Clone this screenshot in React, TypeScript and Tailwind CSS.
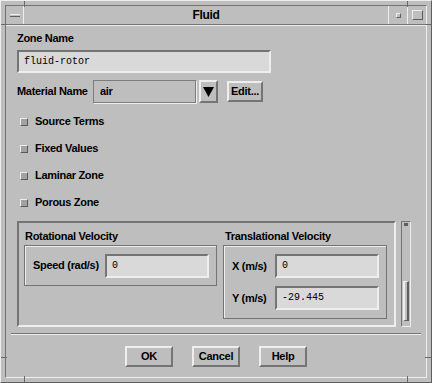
import React from "react"

// Motif-style bevels
const raised = "border-2 border-t-[#eeeeee] border-l-[#eeeeee] border-b-[#747474] border-r-[#747474]"
const sunken = "border-2 border-t-[#747474] border-l-[#747474] border-b-[#eeeeee] border-r-[#eeeeee]"
const label = "font-bold text-[11px] leading-[13px] tracking-[-0.3px] text-black whitespace-nowrap"
const mono = "font-['Liberation_Mono',monospace] text-[10px] leading-[12px] text-black"

function Field({ value, width }: { value: string; width: string }) {
  return (
    <div className={`${sunken} ${width} h-[24px] bg-[#d9d9d9] flex items-center pl-[5px]`}>
      <span className={mono}>{value}</span>
    </div>
  )
}

function Button({ children }: { children: React.ReactNode }) {
  return (
    <div className={`${raised} w-[48px] h-[21px] bg-[#bebebe] flex items-center justify-center`}>
      <span className={label}>{children}</span>
    </div>
  )
}

function Toggle({ text }: { text: string }) {
  return (
    <div className="h-[27px] flex items-center pl-[3px] gap-[7px]">
      <div className="w-[8px] h-[8px] border border-t-[#eeeeee] border-l-[#eeeeee] border-b-[#5a5a5a] border-r-[#5a5a5a] bg-[#a2a2a2]" />
      <span className={label}>{text}</span>
    </div>
  )
}

// resize-handle ticks on the window frame
function Tick({ className }: { className: string }) {
  return <div className={`absolute bg-[#6a6a6a] ${className}`} />
}

export default function App() {
  return (
    <div className="relative w-[432px] h-[383px] bg-[#bebebe] font-['Liberation_Sans',Arial,sans-serif] border border-t-[#eeeeee] border-l-[#eeeeee] border-b-[#5e5e5e] border-r-[#5e5e5e] p-[4px] flex">
      <Tick className="left-[23px] top-0 w-px h-[6px]" />
      <Tick className="left-[406px] top-0 w-px h-[6px]" />
      <Tick className="left-0 top-[23px] w-[6px] h-px" />
      <Tick className="right-0 top-[23px] w-[6px] h-px" />
      <Tick className="left-0 top-[356px] w-[6px] h-px" />
      <Tick className="right-0 top-[356px] w-[6px] h-px" />
      <Tick className="left-[23px] bottom-0 w-px h-[6px]" />
      <Tick className="left-[406px] bottom-0 w-px h-[6px]" />

      <div className="flex-1 flex flex-col border border-t-[#747474] border-l-[#747474] border-b-[#eeeeee] border-r-[#eeeeee]">
        {/* Title bar */}
        <div className="h-[19px] flex border-b border-b-[#747474]">
          <div className="w-[18px] flex items-center justify-center border-r border-r-[#eeeeee]">
            <div className="w-[10px] h-[3px] border-t border-t-[#eeeeee] border-b border-b-[#5e5e5e] bg-[#bebebe]" />
          </div>
          <div className="flex-1 flex items-center justify-center">
            <span className="font-bold text-[12px] leading-[14px] tracking-[-0.3px] text-black">Fluid</span>
          </div>
          <div className="w-[19px] flex items-center justify-center border-l border-l-[#eeeeee]">
            <div className="w-[5px] h-[5px] border border-t-[#eeeeee] border-l-[#eeeeee] border-b-[#5e5e5e] border-r-[#5e5e5e]" />
          </div>
          <div className="w-[19px] flex items-center justify-center border-l border-l-[#eeeeee]">
            <div className="w-[11px] h-[10px] border border-t-[#eeeeee] border-l-[#eeeeee] border-b-[#5e5e5e] border-r-[#5e5e5e]" />
          </div>
        </div>

        {/* Body */}
        <div className="flex-1 flex flex-col border-t border-t-[#eeeeee]">
          <div className="px-[11px] flex flex-col">
            <div className={`${label} pt-[6px]`}>Zone Name</div>
            <div className={`${sunken} mt-[5px] w-[254px] h-[23px] bg-[#d9d9d9] flex items-center pl-[5px]`}>
              <span className={mono}>fluid-rotor</span>
            </div>

            <div className="mt-[7px] h-[23px] flex items-center">
              <span className={`${label} w-[76px]`}>Material Name</span>
              <div className="w-[103px] h-[23px] border border-[#7c7c7c] shadow-[1px_1px_0_#eeeeee] flex items-center pl-[6px]">
                <span className={label}>air</span>
              </div>
              <div className={`${raised} ml-[3px] w-[19px] h-[23px] flex items-center justify-center`}>
                <svg width="11" height="11" viewBox="0 0 11 11">
                  <polygon points="0,1 11,1 5.5,11" fill="#000" />
                </svg>
              </div>
              <div className={`${raised} ml-[9px] w-[36px] h-[21px] flex items-center justify-center`}>
                <span className={label}>Edit...</span>
              </div>
            </div>

            <div className="mt-[5px] flex flex-col">
              <Toggle text="Source Terms" />
              <Toggle text="Fixed Values" />
              <Toggle text="Laminar Zone" />
              <Toggle text="Porous Zone" />
            </div>

            {/* Scrolled panel */}
            <div className="mt-[5px] flex">
              <div className={`${sunken} w-[379px] h-[106px] flex gap-[6px] pl-[5px]`}>
                <div className="flex flex-col">
                  <div className={`${label} pt-[7px] pl-[1px]`}>Rotational Velocity</div>
                  <div className="mt-[2px] w-[193px] h-[41px] border border-[#747474] shadow-[inset_1px_1px_0_#eeeeee] flex items-center pl-[8px]">
                    <span className={`${label} w-[72px]`}>Speed (rad/s)</span>
                    <Field value="0" width="w-[104px]" />
                  </div>
                </div>
                <div className="flex flex-col">
                  <div className={`${label} pt-[7px] pl-[2px]`}>Translational Velocity</div>
                  <div className="mt-[2px] w-[164px] h-[74px] border border-[#747474] shadow-[inset_1px_1px_0_#eeeeee] flex flex-col gap-[8px] pt-[8px] pl-[8px]">
                    <div className="flex items-center">
                      <span className={`${label} w-[43px]`}>X (m/s)</span>
                      <Field value="0" width="w-[104px]" />
                    </div>
                    <div className="flex items-center">
                      <span className={`${label} w-[43px]`}>Y (m/s)</span>
                      <Field value="-29.445" width="w-[104px]" />
                    </div>
                  </div>
                </div>
              </div>
              <div className="ml-[5px] w-[10px] h-[106px] border border-t-[#747474] border-l-[#747474] border-b-[#eeeeee] border-r-[#eeeeee] flex flex-col">
                <div className="h-[4px] flex justify-center pt-[1px]">
                  <div className="w-[4px] h-[3px] bg-[#5e5e5e]" />
                </div>
                <div className="flex-1" />
                <div className="mx-[1px] mb-[5px] h-[40px] border border-t-[#eeeeee] border-l-[#eeeeee] border-b-[#5e5e5e] border-r-[#5e5e5e] border-l-2 border-r-2" />
              </div>
            </div>
          </div>

          <div className="mt-[6px] mx-[5px] h-[2px] border-t border-t-[#747474] border-b border-b-[#eeeeee]" />

          <div className="mt-[11px] flex justify-center gap-[19px]">
            <Button>OK</Button>
            <Button>Cancel</Button>
            <Button>Help</Button>
          </div>
        </div>
      </div>
    </div>
  )
}
